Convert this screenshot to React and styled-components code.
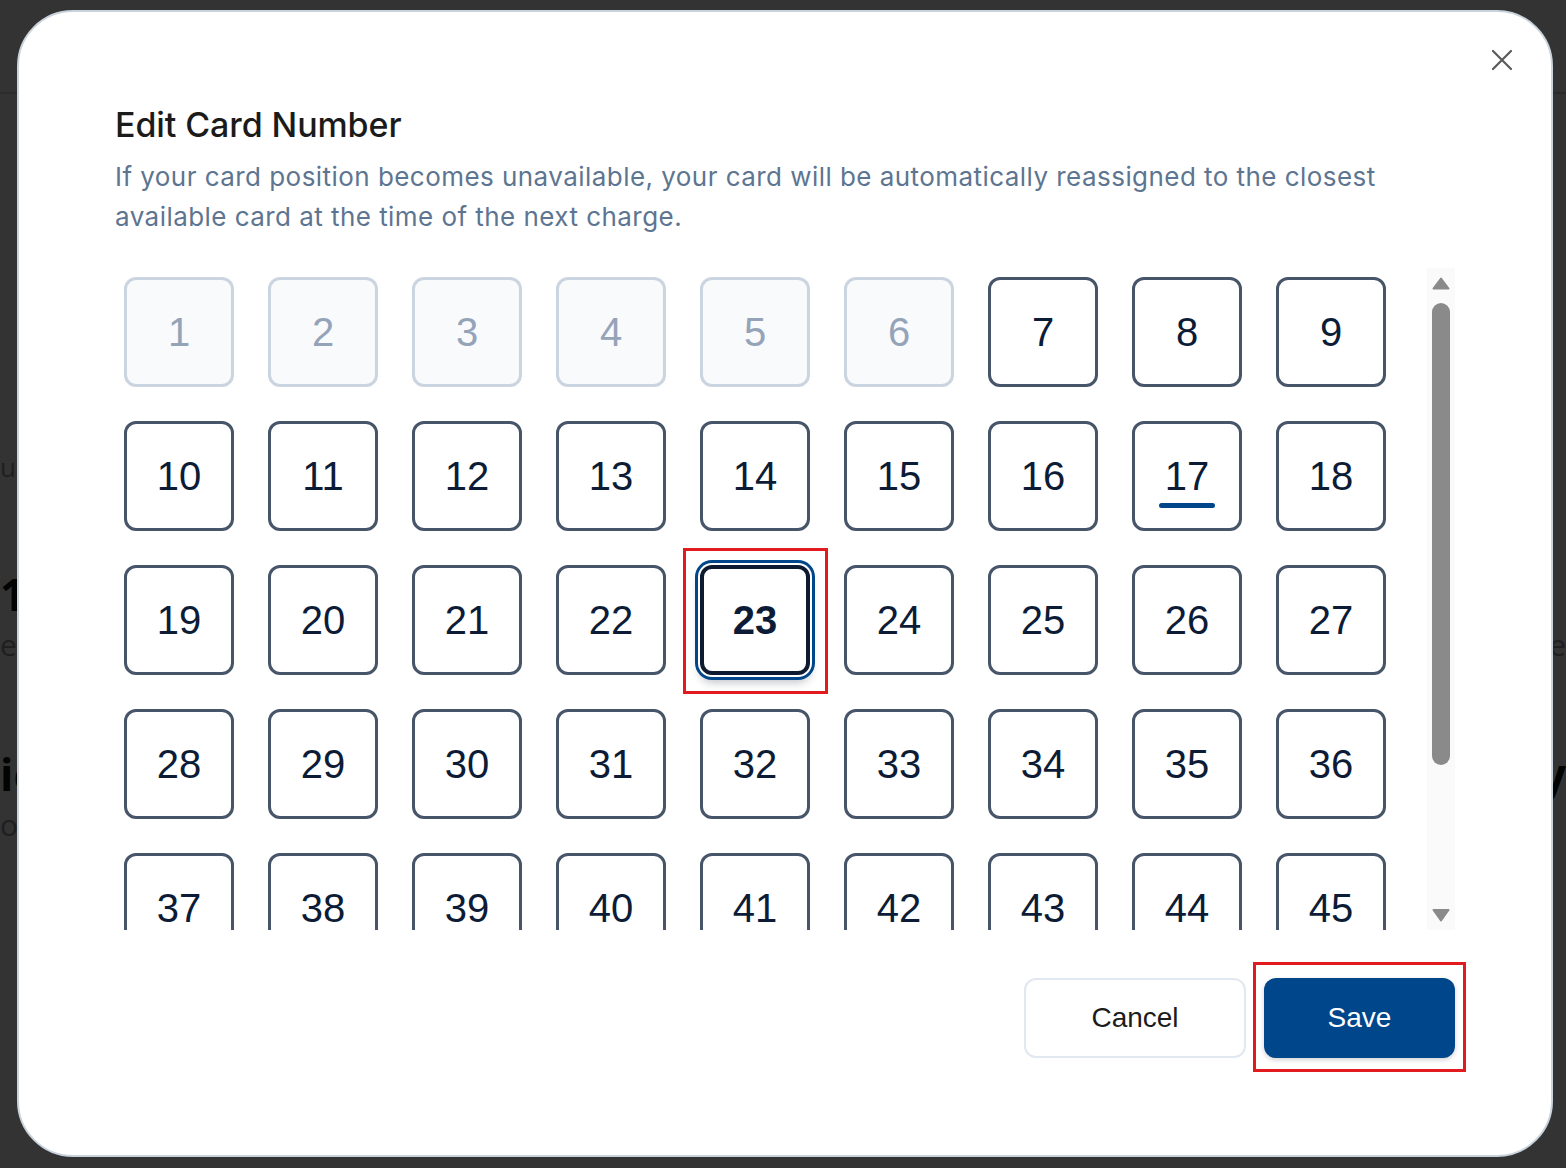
import React from 'react';
import styled, { createGlobalStyle, css } from 'styled-components';

const GlobalStyle = createGlobalStyle`
  html, body {
    margin: 0;
    padding: 0;
    overflow: hidden;
  }
  body {
    font-family: Inter, "Noto Sans", sans-serif;
    background: #ffffff;
  }
`;

// page that sits under the dimmed overlay
const Backdrop = styled.div`
  width: 1566px;
  height: 1168px;
  background: #ffffff;
`;

const BackHeader = styled.div`
  height: 92px;
  border-bottom: 2px solid #d8d8d8;
`;

const BackRow = styled.div`
  display: flex;
  justify-content: space-between;
  margin-top: ${(p) => p.$top}px;
  font-family: "Open Sans", sans-serif;
  font-size: ${(p) => p.$size}px;
  line-height: 1;
  font-weight: ${(p) => (p.$bold ? 700 : 400)};
  color: ${(p) => (p.$bold ? '#111111' : '#9a9a9a')};
  white-space: nowrap;
`;

const Overlay = styled.div`
  position: fixed;
  inset: 0;
  background: rgba(0, 0, 0, 0.8);
  padding: 10px 0 0 17px;
`;

const Modal = styled.div`
  position: relative;
  box-sizing: border-box;
  width: 1536px;
  height: 1147px;
  background: #ffffff;
  border: 2px solid #c9d3de;
  border-radius: 56px;
  padding: 93px 96px 0 94px;
`;

const CloseButton = styled.button`
  position: absolute;
  top: 36px;
  right: 37px;
  width: 24px;
  height: 24px;
  padding: 0;
  border: none;
  background: none;
  cursor: pointer;
  display: flex;
  align-items: center;
  justify-content: center;
`;

const Title = styled.h2`
  margin: 0 0 0 2px;
  font-size: 34px;
  line-height: 40px;
  font-weight: 500;
  letter-spacing: -0.1px;
  color: #1b1b1b;
`;

const Subtitle = styled.p`
  margin: 12px 0 0 2px;
  font-size: 26px;
  line-height: 40px;
  font-weight: 400;
  letter-spacing: 0.45px;
  color: #5d7590;
  white-space: nowrap;
`;

const Body = styled.div`
  display: flex;
  height: 662px;
  margin-top: 31px;
`;

const GridArea = styled.div`
  flex: 1;
  overflow: hidden;
  padding: 9px 0 0 11px;
`;

const Grid = styled.div`
  display: grid;
  grid-template-columns: repeat(9, 110px);
  gap: 34px;
`;

const Cell = styled.button`
  position: relative;
  box-sizing: border-box;
  width: 110px;
  height: 110px;
  padding: 0;
  border: 3px solid #475569;
  border-radius: 12px;
  background: #ffffff;
  font-family: "Liberation Sans", Arial, sans-serif;
  font-size: 40px;
  line-height: 1;
  color: #0c1c36;
  display: flex;
  align-items: center;
  justify-content: center;
  cursor: pointer;

  ${(p) =>
    p.$disabled &&
    css`
      background: #f8fafc;
      border-color: #cbd5e1;
      color: #95a3b8;
      cursor: default;
    `}

  ${(p) =>
    p.$current &&
    css`
      &::after {
        content: '';
        position: absolute;
        left: 50%;
        bottom: 20px;
        width: 56px;
        height: 5px;
        margin-left: -28px;
        border-radius: 3px;
        background: #00468b;
      }
    `}

  ${(p) =>
    p.$selected &&
    css`
      border: 4px solid #0d1a30;
      font-weight: 700;
      box-shadow: 0 0 0 2px #ffffff, 0 0 0 5px #00468b, 0 7px 10px rgba(15, 23, 42, 0.28);
      &::before {
        content: '';
        position: absolute;
        top: -21px;
        left: -21px;
        right: -22px;
        bottom: -23px;
        border: 3px solid #e11b1f;
        pointer-events: none;
      }
    `}
`;

const Track = styled.div`
  width: 28px;
  background: #fafafa;
  display: flex;
  flex-direction: column;
  align-items: center;
  padding: 9px 0 8px;
  box-sizing: border-box;
`;

const Thumb = styled.div`
  width: 18px;
  height: 462px;
  margin-top: 13px;
  border-radius: 9px;
  background: #8a8a8a;
`;

const Spacer = styled.div`
  flex: 1;
`;

const Footer = styled.div`
  display: flex;
  justify-content: flex-end;
  gap: 18px;
  margin-top: 48px;
`;

const Button = styled.button`
  position: relative;
  box-sizing: border-box;
  height: 80px;
  border-radius: 12px;
  font-family: "Liberation Sans", Arial, sans-serif;
  font-size: 28px;
  cursor: pointer;
  ${(p) =>
    p.$primary
      ? css`
          width: 191px;
          border: none;
          background: #00468b;
          color: #ffffff;
          box-shadow: 0 2px 5px rgba(0, 0, 0, 0.18);
          &::after {
            content: '';
            position: absolute;
            top: -16px;
            left: -11px;
            right: -11px;
            bottom: -14px;
            border: 3px solid #e11b1f;
            pointer-events: none;
          }
        `
      : css`
          width: 222px;
          border: 2px solid #e2e8f0;
          background: #ffffff;
          color: #1c1c1c;
        `}
`;

const disabled = [1, 2, 3, 4, 5, 6];
const numbers = Array.from({ length: 45 }, (_, i) => i + 1);

const App = () => {
  const [selected, setSelected] = React.useState(23);
  const current = 17;

  return (
    <>
      <GlobalStyle />
      <Backdrop>
        <BackHeader />
        <BackRow $top={360} $size={26}><span>u</span><span></span></BackRow>
        <BackRow $top={92} $size={44} $bold><span>1</span><span></span></BackRow>
        <BackRow $top={14} $size={30}><span>ec</span><span>ne</span></BackRow>
        <BackRow $top={92} $size={44} $bold><span>ic</span><span>y</span></BackRow>
        <BackRow $top={14} $size={30}><span>or</span><span></span></BackRow>
      </Backdrop>
      <Overlay>
        <Modal>
          <CloseButton aria-label="Close">
            <svg width="22" height="22" viewBox="0 0 22 22">
              <path d="M2 2 L20 20 M20 2 L2 20" stroke="#5a5a5a" strokeWidth="2.2" strokeLinecap="round" />
            </svg>
          </CloseButton>
          <Title>Edit Card Number</Title>
          <Subtitle>
            If your card position becomes unavailable, your card will be automatically reassigned to the closest
            <br />
            available card at the time of the next charge.
          </Subtitle>
          <Body>
            <GridArea>
              <Grid>
                {numbers.map((n) => (
                  <Cell
                    key={n}
                    $disabled={disabled.includes(n)}
                    $current={n === current}
                    $selected={n === selected}
                    onClick={() => !disabled.includes(n) && setSelected(n)}
                  >
                    {n}
                  </Cell>
                ))}
              </Grid>
            </GridArea>
            <Track>
              <svg width="18" height="13" viewBox="0 0 18 13">
                <path d="M9 1.5 L16.5 11.5 H1.5 Z" fill="#8a8a8a" stroke="#8a8a8a" strokeWidth="2" strokeLinejoin="round" />
              </svg>
              <Thumb />
              <Spacer />
              <svg width="18" height="14" viewBox="0 0 18 14">
                <path d="M1.5 2 H16.5 L9 12.5 Z" fill="#8a8a8a" stroke="#8a8a8a" strokeWidth="2" strokeLinejoin="round" />
              </svg>
            </Track>
          </Body>
          <Footer>
            <Button>Cancel</Button>
            <Button $primary>Save</Button>
          </Footer>
        </Modal>
      </Overlay>
    </>
  );
};

export default App;
